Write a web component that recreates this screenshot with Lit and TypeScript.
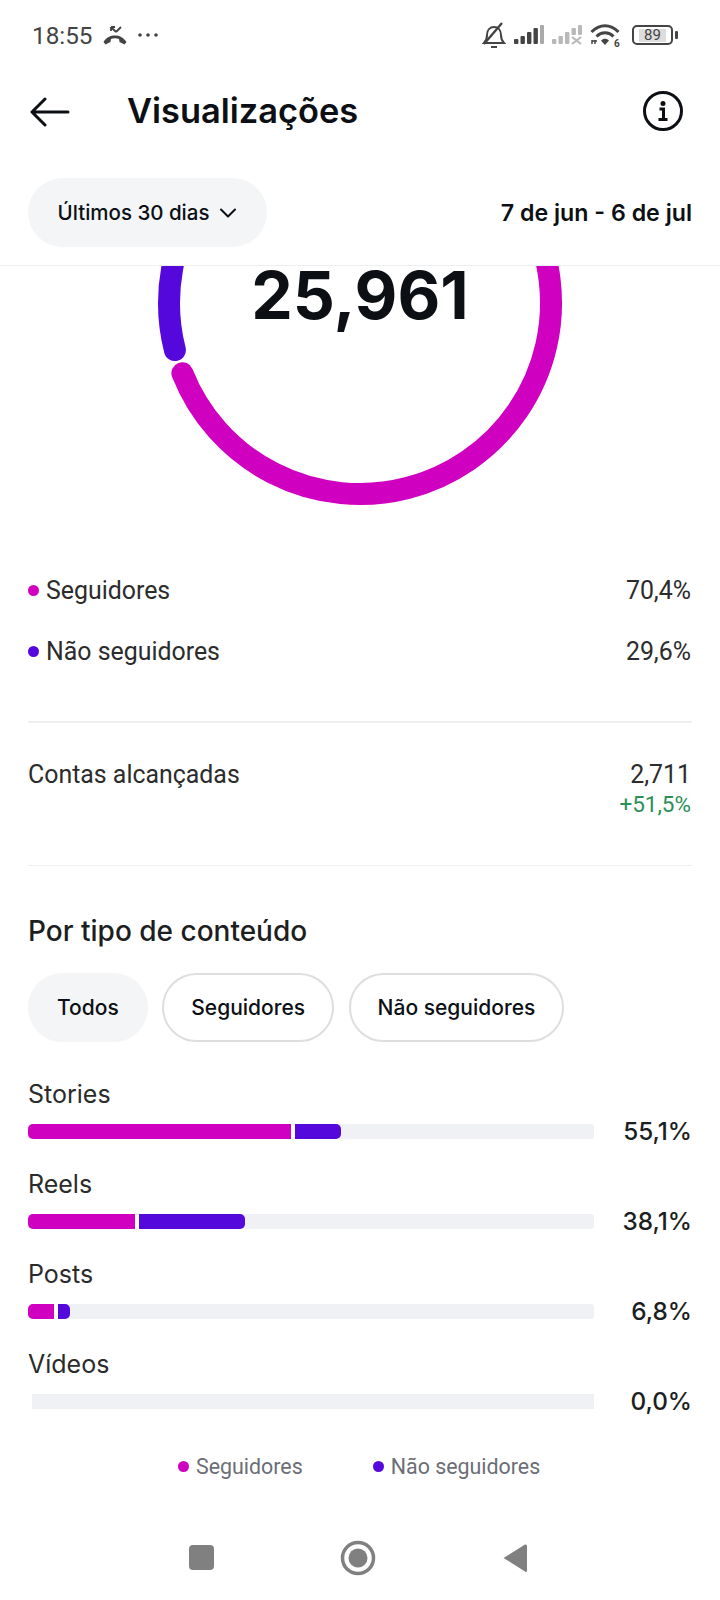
import { LitElement, html, css, svg } from "lit";
import { customElement } from "lit/decorators.js";

const MAG = "#d000c0";
const BLUE = "#5508dc";

function pt(r: number, dx: number, dy: number) {
  const l = Math.hypot(dx, dy);
  return `${(360 + (dx / l) * r).toFixed(1)} ${(304 + (dy / l) * r).toFixed(1)}`;
}

const rows = [
  { label: "Stories", pct: "55,1%", a: 263, gap: 4, b: 46 },
  { label: "Reels", pct: "38,1%", a: 107, gap: 4, b: 106 },
  { label: "Posts", pct: "6,8%", a: 26, gap: 4, b: 12 },
  { label: "Vídeos", pct: "0,0%", a: 0, gap: 4, b: 0 },
];

@customElement("app-root")
export class AppRoot extends LitElement {
  static styles = css`
    :host { display: block; width: 720px; height: 1600px; background: #fff; overflow: hidden; position: relative; font-family: Inter, "Liberation Sans", sans-serif; color: #0c1014; }
    .status { height: 70px; display: flex; align-items: center; justify-content: space-between; padding: 0 47px 0 32px; box-sizing: border-box; color: #444; }
    .status-left { display: flex; align-items: center; gap: 10px; font: 400 24.3px Roboto, sans-serif; }
    .status-right { display: flex; align-items: center; gap: 8px; }
    .batt { position: relative; width: 41px; height: 20px; margin-left: 2px; border: 2px solid #444; border-radius: 5px; box-sizing: border-box; display: flex; align-items: center; justify-content: center; font: 400 15px Roboto, sans-serif; }
    .batt span { background: #ddd; padding: 0 5px; line-height: 13px; }
    .batt::after { content: ""; position: absolute; right: -7px; top: 4px; width: 3px; height: 8px; background: #444; border-radius: 1px; }
    .header { height: 84px; display: flex; align-items: center; padding: 0 30px; }
    .title { margin-left: 57px; margin-top: -4px; font-size: 34.4px; font-weight: 600; flex: 1; }
    .info { margin-right: 7px; margin-top: -3px; }
    .filters { height: 112px; box-sizing: border-box; padding: 25px 28px 19px; display: flex; align-items: center; justify-content: space-between; border-bottom: 1.5px solid #eceef0; }
    .pill { height: 69px; width: 239px; background: #f3f5f7; border-radius: 35px; display: flex; align-items: center; justify-content: center; gap: 10px; font-size: 20.5px; font-weight: 500; }
    .dates { font-size: 23.2px; font-weight: 600; }
    .donut { position: relative; height: 273px; }
    .donut svg { display: block; }
    .total { position: absolute; top: -13px; left: 0; right: 0; text-align: center; font-size: 66px; font-weight: 700; line-height: 84px; }
    .legend-rows { padding: 27px 29px 0 28px; font: 400 24.9px Roboto, sans-serif; color: #2c2c2c; margin-top: -6px; }
    .lrow { height: 61px; display: flex; align-items: center; justify-content: space-between; }
    .lname { display: flex; align-items: center; gap: 7px; }
    .dot { width: 11px; height: 11px; border-radius: 50%; display: inline-block; }
    .mag { background: #d000c0; }
    .blue { background: #5508dc; }
    .divider { height: 1.5px; background: #eeeff1; margin: 0 28px; }
    .divider.one { margin-top: 39px; }
    .divider.two { margin-top: 34px; }
    .reach { padding: 35px 29px 0 28px; height: 108px; box-sizing: border-box; display: flex; justify-content: space-between; font: 400 24.9px Roboto, sans-serif; color: #2c2c2c; line-height: 34px; }
    .reach .right { text-align: right; }
    .delta { color: #2b8f56; font-size: 22.5px; line-height: 24px; }
    h2 { margin: 0; font-size: 28px; font-weight: 500; padding: 45px 28px 0; line-height: 40px; color: #1c1e21; }
    .chips { display: flex; gap: 14.5px; padding: 22px 28px 0; }
    .chip { height: 69px; box-sizing: border-box; border-radius: 35px; border: 2px solid #dcdee0; display: flex; align-items: center; justify-content: center; font-size: 21px; font-weight: 500; padding: 0 27px; }
    .chip.on { background: #f3f5f7; border-color: #f3f5f7; }
    .bars { padding: 31px 28px 0; }
    .row { height: 90px; }
    .lab { font-size: 25px; line-height: 36px; color: #2b2b2b; height: 50px; padding-top: 3px; box-sizing: border-box; }
    .line { display: flex; align-items: center; justify-content: space-between; height: 16px; }
    .track { width: 566px; height: 15px; background: #f0f1f5; border-radius: 3px; display: flex; overflow: hidden; }
    .track.empty { margin-left: 4px; width: 562px; border-radius: 0; }
    .seg { height: 100%; }
    .seg.mag { border-radius: 5px 0 0 5px; }
    .seg.blue { border-radius: 0 5px 5px 0; }
    .sep { background: #fff; }
    .pct { font-size: 24.3px; font-weight: 500; color: #1c1e21; }
    .legend { display: flex; padding: 21px 0 0 178px; gap: 70px; font: 400 21.4px Roboto, sans-serif; color: #6b6e76; }
    .nav { position: absolute; left: 0; top: 1530px; width: 720px; height: 60px; }
  `;

  render() {
    const gray = "#444";
    const bars = (fill: string) => svg`
      <rect x="0" y="14" width="4.400" height="5" rx="1" fill="${fill}"/>
      <rect x="6.500" y="11" width="4.400" height="8" rx="1" fill="${fill}"/>
      <rect x="13" y="7" width="4.400" height="12" rx="1" fill="${fill}"/>`;
    return html`
      <div class="status">
        <div class="status-left">
          <span>18:55</span>
          <svg width="26" height="22" viewBox="0 0 26 22" style="margin-right:-1px;margin-left:-1px">
            <path d="M1.500 18c3-5 7-6.500 11.500-6.500S21 13 24.500 18l-2 2.500-5-2.500-.5-3c-2.500-1-5.500-1-8 0l-.5 3-5 2.500z" fill="${gray}"/>
            <path d="M9 3l5 5M9 3v4M9 3h4M14 8l5-5" fill="none" stroke="${gray}" stroke-width="1.800"/>
          </svg>
          <svg width="24" height="6" viewBox="0 0 24 6"><circle cx="3" cy="3" r="1.800" fill="${gray}"/><circle cx="11" cy="3" r="1.800" fill="${gray}"/><circle cx="19" cy="3" r="1.800" fill="${gray}"/></svg>
        </div>
        <div class="status-right">
          <svg width="24" height="26" viewBox="0 0 24 26" fill="none" stroke="${gray}" stroke-width="2">
            <path d="M2 21c2-2 3-4 3-8 0-5 3-8 7-8s7 3 7 8c0 4 1 6 3 8z"/><path d="M9 25h6"/><path d="M2 22L20 1" stroke-width="2.400"/>
          </svg>
          <svg width="30" height="20" viewBox="0 0 30 20">
            ${bars(gray)}
            <rect x="19.500" y="3" width="4.400" height="16" rx="1" fill="${gray}"/>
            <rect x="26" y="0" width="4" height="19" rx="1" fill="#aaa"/>
          </svg>
          <svg width="30" height="20" viewBox="0 0 30 20">
            ${bars("#b8b8b8")}
            <rect x="19.500" y="3" width="4.400" height="7" rx="1" fill="#b8b8b8"/>
            <rect x="26" y="0" width="4" height="10" rx="1" fill="#b8b8b8"/>
            <path d="M20 12l9 7M29 12l-9 7" stroke="#b8b8b8" stroke-width="2.200"/>
          </svg>
          <svg width="32" height="30" viewBox="0 -3 32 30" fill="none" stroke="${gray}" stroke-width="3">
            <path d="M1.500 9c8-8.500 19-8.500 27 0"/><path d="M6.500 13.500c5-5 12-5 17 0"/>
            <path d="M11 17.500c2.500-2.500 5.500-2.500 8 0l-4 4.500z" fill="${gray}" stroke="none"/>
            <path d="M2 21v-4M5 17v4M7 18h-5" stroke-width="1.500"/>
            <text x="24" y="23.500" font-size="10" font-family="Roboto" font-weight="700" fill="${gray}" stroke="none">6</text>
          </svg>
          <div class="batt"><span>89</span></div>
        </div>
      </div>

      <div class="header">
        <svg width="40" height="32" viewBox="0 0 40 32" fill="none" stroke="#0c1014" stroke-width="3" stroke-linecap="round" stroke-linejoin="round">
          <path d="M38 16H3M15 3L2 16l13 13"/>
        </svg>
        <div class="title">Visualizações</div>
        <svg class="info" width="40" height="40" viewBox="0 0 40 40" fill="none" stroke="#0c1014">
          <circle cx="20" cy="20" r="18.500" stroke-width="3"/>
          <circle cx="20" cy="12.500" r="2.500" fill="#0c1014" stroke="none"/>
          <path d="M16.500 18h4v10M15.500 28.500h9" stroke-width="3"/>
        </svg>
      </div>

      <div class="filters">
        <div class="pill">
          <span>Últimos 30 dias</span>
          <svg width="18" height="10" viewBox="0 0 18 10" fill="none" stroke="#0c1014" stroke-width="2" stroke-linecap="round" stroke-linejoin="round"><path d="M2 1.500l7 7 7-7"/></svg>
        </div>
        <div class="dates">7 de jun - 6 de jul</div>
      </div>

      <div class="donut">
        <svg width="720" height="273" viewBox="0 267 720 273" fill="none" stroke-width="22" stroke-linecap="round">
          ${svg`<path d="M360 113 A191 191 0 0 0 ${pt(191, -185, 47)}" stroke="${BLUE}"/>
          <path d="M${pt(191, -177, 70)} A191 191 0 1 0 360 113" stroke="${MAG}"/>`}
        </svg>
        <div class="total">25,961</div>
      </div>

      <div class="legend-rows">
        <div class="lrow"><span class="lname"><i class="dot mag"></i>Seguidores</span><span>70,4%</span></div>
        <div class="lrow"><span class="lname"><i class="dot blue"></i>Não seguidores</span><span>29,6%</span></div>
      </div>
      <div class="divider one"></div>
      <div class="reach">
        <span>Contas alcançadas</span>
        <div class="right">2,711<div class="delta">+51,5%</div></div>
      </div>
      <div class="divider two"></div>
      <h2>Por tipo de conteúdo</h2>
      <div class="chips">
        <div class="chip on">Todos</div>
        <div class="chip">Seguidores</div>
        <div class="chip">Não seguidores</div>
      </div>
      <div class="bars">
        ${rows.map(
          (r) => html`<div class="row">
            <div class="lab">${r.label}</div>
            <div class="line">
              <div class="track ${r.a ? "" : "empty"}">
                ${r.a
                  ? html`<div class="seg mag" style="width:${r.a}px"></div>
                      <div class="sep" style="width:${r.gap}px"></div>
                      <div class="seg blue" style="width:${r.b}px"></div>`
                  : ""}
              </div>
              <span class="pct">${r.pct}</span>
            </div>
          </div>`
        )}
      </div>
      <div class="legend">
        <span class="lname"><i class="dot mag"></i>Seguidores</span>
        <span class="lname"><i class="dot blue"></i>Não seguidores</span>
      </div>
      <svg class="nav" viewBox="0 1530 720 60" fill="#808080">
        <rect x="189" y="1545" width="25" height="25" rx="4"/>
        <circle cx="358" cy="1558" r="15.500" fill="none" stroke="#808080" stroke-width="3.500"/>
        <circle cx="358" cy="1558" r="9.500"/>
        <path d="M503.500 1558 L525 1544.500 Q527 1544 527 1546 V1570 Q527 1573 525 1571.500 Z"/>
      </svg>
    `;
  }
}
